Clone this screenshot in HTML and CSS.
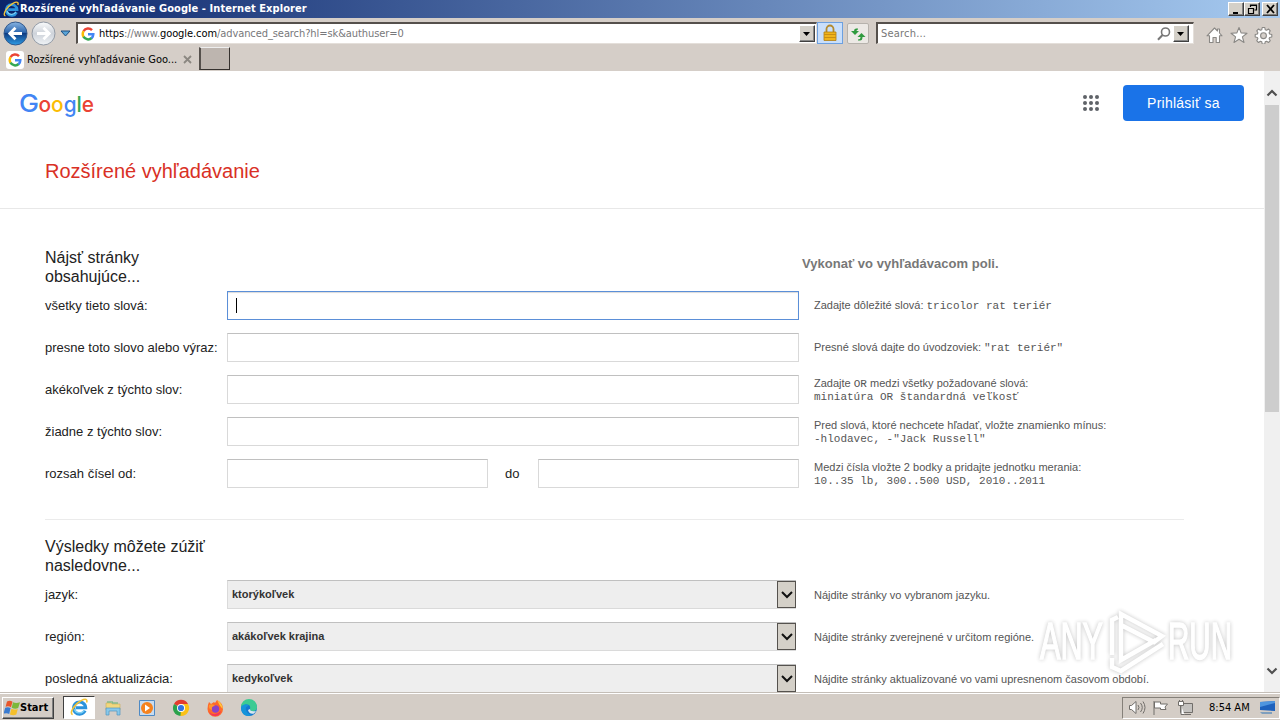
FILE: index.html
```html
<!DOCTYPE html>
<html lang="sk">
<head>
<meta charset="utf-8">
<title>Rozšírené vyhľadávanie Google</title>
<link rel="stylesheet" href="styles.css">
</head>
<body>
<svg class="defs" width="0" height="0">
  <defs>
    <g id="g-mark" fill="none" stroke-width="2.500">
      <path d="M2.600 4.200A5.300 5.300 0 0 1 11 3.200" stroke="#ea4335"/>
      <path d="M2.600 4.200A5.600 5.600 0 0 0 2.500 9.800" stroke="#fbbc05"/>
      <path d="M2.500 9.700A5.300 5.300 0 0 0 10.700 11" stroke="#34a853"/>
      <path d="M7 7.200h5.300A5.300 5.300 0 0 1 10.500 11.200" stroke="#4285f4"/>
    </g>
    <g id="ie-mark">
      <path d="M13.500 11.300A5.400 5.400 0 1 1 14 8.700H5.200" fill="none" stroke="#2b93dc" stroke-width="2.800"/>
      <path d="M12.900 10.900A4.900 4.900 0 0 1 4 10" fill="none" stroke="#7dd0f5" stroke-width="1.200"/>
      <path d="M2.400 14.800C-1 14 3.600 5.600 10 2.300C14 .2 16 1.200 14.800 4" fill="none" stroke="#f3c336" stroke-width="1.400"/>
    </g>
  </defs>
</svg>
<div class="screen">
  <header class="titlebar">
    <svg class="title-icon" width="17" height="17" viewBox="0 0 17 17"><use href="#ie-mark"/></svg>
    <span class="title-text">Rozšírené vyhľadávanie Google - Internet Explorer</span>
    <div class="win-buttons">
      <span class="win-btn"><svg width="11" height="10"><path d="M2 8h5v2H2z"/></svg></span>
      <span class="win-btn"><svg width="11" height="10"><path d="M3.500 3V1h6v5H7.500M3.500 1.500h6M1.500 4.500h5v5h-5zM1 4.500h6" fill="none" stroke="#000" stroke-width="1.200"/></svg></span>
      <span class="win-btn close"><svg width="11" height="10"><path d="M2 1l7 8M9 1L2 9" stroke="#000" stroke-width="1.800"/></svg></span>
    </div>
  </header>

  <nav class="navbar">
    <svg class="history" width="75" height="29" viewBox="0 0 75 29">
      <defs>
        <linearGradient id="blue" x2="0" y2="1"><stop offset="0" stop-color="#88b4e2"/><stop offset=".45" stop-color="#2d67ae"/><stop offset=".5" stop-color="#0f3c82"/><stop offset="1" stop-color="#2d9de6"/></linearGradient>
        <linearGradient id="pale" x2="0" y2="1"><stop offset="0" stop-color="#fafbfc"/><stop offset=".5" stop-color="#ced3da"/><stop offset="1" stop-color="#f0f3f6"/></linearGradient>
      </defs>
      <circle cx="15.500" cy="15.500" r="11.500" fill="url(#blue)" stroke="#33598c"/>
      <path d="M22 15.500H10M15.500 9.800L9.800 15.500l5.700 5.700" fill="none" stroke="#fff" stroke-width="2.800"/>
      <circle cx="43.500" cy="15.500" r="11.500" fill="url(#pale)" stroke="#929aa5"/>
      <path d="M37 15.500h12M43.500 9.800l5.700 5.700-5.700 5.700" fill="none" stroke="#fff" stroke-width="2.800"/>
      <path d="M61 13h9l-4.500 5z" fill="#5aa5d8" stroke="#1d4f80" stroke-width="1"/>
    </svg>
    <div class="address">
      <svg width="14" height="14" viewBox="0 0 14 14"><use href="#g-mark"/></svg>
      <span class="url"><b>https</b>://www.<b>google.com</b>/advanced_search?hl=sk&amp;authuser=0</span>
      <span class="drop"><svg width="8" height="4"><path d="M0 0h7L3.500 4z"/></svg></span>
    </div>
    <span class="lock"><svg width="16" height="18" viewBox="0 0 16 18"><path d="M4.500 9V5a3.500 3.500 0 0 1 7 0v4" fill="none" stroke="#b38a2e" stroke-width="1.800"/><path d="M2 8h12v8.500H2z" fill="#f0b41c" stroke="#b07d14" stroke-width=".8"/><path d="M2 10.500h12M2 13.500h12" stroke="#c98f14"/></svg></span>
    <span class="refresh"><svg width="16" height="16" viewBox="0 0 16 16" fill="#2f9a3e"><path d="M8 2.500H6Q4 2.500 4 5H1l4 4L9 5H6.500Q6.500 3.500 8 3.500z"/><path d="M8 14.500h2q2.500 0 2.500-3.500h3L11.500 7 7.500 11h3q0 2.500-2.500 2.500z"/></svg></span>
    <div class="search">
      <span class="placeholder">Search...</span>
      <svg width="14" height="14" viewBox="0 0 14 14"><circle cx="8.500" cy="5" r="4" fill="none" stroke="#777" stroke-width="1.600"/><path d="M5.500 8L1 12.800" stroke="#777" stroke-width="2"/></svg>
      <span class="drop"><svg width="8" height="4"><path d="M0 0h7L3.500 4z"/></svg></span>
    </div>
    <svg class="tools" width="68" height="18" viewBox="0 0 68 18" fill="#fff" stroke="#8a8885" stroke-width="1.100" stroke-linejoin="round">
      <path d="M3.500 16.500V9.800H1L8.500 2l3 3V3h2v4L16 9.800h-2.500v6.700h-3.300v-5H7v5z"/>
      <path d="M33 1.500l2.100 5.400 5.900.3-4.600 3.700 1.600 5.600-5-3.200-5 3.200 1.600-5.600L25 7.200l5.900-.3z"/>
      <path d="M56.200 1.500h2.600l.4 2.200 1.400.6 1.900-1.300 1.800 1.800-1.200 1.900.5 1.300 2.200.5v2.500l-2.200.5-.5 1.300 1.200 1.900-1.800 1.800-1.900-1.300-1.400.6-.4 2.200h-2.600l-.4-2.200-1.400-.6-1.900 1.300-1.800-1.800 1.200-1.900-.5-1.300-2.200-.5V8.500l2.200-.5.500-1.300-1.200-1.900L52.500 3l1.900 1.300 1.400-.6z"/>
      <circle cx="57.500" cy="9.700" r="2.900" fill="#d6d0ca"/>
    </svg>
  </nav>

  <div class="tabs">
    <div class="tab">
      <span class="tab-icon"><svg width="14" height="14" viewBox="0 0 14 14"><use href="#g-mark"/></svg></span>
      <span class="tab-text">Rozšírené vyhľadávanie Goo...</span>
      <svg width="9" height="9"><path d="M1 1l7 7M8 1L1 8" stroke="#8b8781" stroke-width="1.800"/></svg>
    </div>
    <span class="new-tab"></span>
  </div>

  <div class="viewport">
    <main class="page">
      <div class="page-head">
        <div class="topbar">
          <svg class="logo" width="76" height="34"><text class="initial" x="-1" y="26" textLength="20" lengthAdjust="spacingAndGlyphs" fill="#4285f4">G</text><text x="18.500" y="26" textLength="55.500" lengthAdjust="spacingAndGlyphs"><tspan fill="#ea4335">o</tspan><tspan fill="#fbbc05">o</tspan><tspan fill="#4285f4">g</tspan><tspan fill="#34a853">l</tspan><tspan fill="#ea4335">e</tspan></text></svg>
          <svg class="apps" width="18" height="18" fill="#5f6368"><circle cx="3" cy="3" r="2"/><circle cx="9" cy="3" r="2"/><circle cx="15" cy="3" r="2"/><circle cx="3" cy="9" r="2"/><circle cx="9" cy="9" r="2"/><circle cx="15" cy="9" r="2"/><circle cx="3" cy="15" r="2"/><circle cx="9" cy="15" r="2"/><circle cx="15" cy="15" r="2"/></svg>
          <a class="signin">Prihlásiť sa</a>
        </div>
        <h1>Rozšírené vyhľadávanie</h1>
      </div>
      <form class="form">
        <div class="section-head"><h2>Nájsť stránky<br>obsahujúce...</h2><h3>Vykonať vo vyhľadávacom poli.</h3></div>
        <div class="row"><label>všetky tieto slová:</label><div class="field focus"><span class="caret"></span></div><p>Zadajte dôležité slová: <code>tricolor rat teriér</code></p></div>
        <div class="row"><label>presne toto slovo alebo výraz:</label><div class="field"></div><p>Presné slová dajte do úvodzoviek: <code>"rat teriér"</code></p></div>
        <div class="row"><label>akékoľvek z týchto slov:</label><div class="field"></div><p>Zadajte <code>OR</code> medzi všetky požadované slová:<br><code>miniatúra OR štandardná veľkosť</code></p></div>
        <div class="row"><label>žiadne z týchto slov:</label><div class="field"></div><p>Pred slová, ktoré nechcete hľadať, vložte znamienko mínus:<br><code>-hlodavec, -"Jack Russell"</code></p></div>
        <div class="row"><label>rozsah čísel od:</label><div class="range"><div class="field"></div><span>do</span><div class="field"></div></div><p>Medzi čísla vložte 2 bodky a pridajte jednotku merania:<br><code>10..35 lb, 300..500 USD, 2010..2011</code></p></div>
        <div class="section-head second"><h2>Výsledky môžete zúžiť<br>nasledovne...</h2></div>
        <div class="row"><label>jazyk:</label><div class="select"><b>ktorýkoľvek</b><span class="arrow"><svg width="12" height="8"><path d="M1 1l5 5 5-5" fill="none" stroke="#111" stroke-width="2"/></svg></span></div><p>Nájdite stránky vo vybranom jazyku.</p></div>
        <div class="row"><label>región:</label><div class="select"><b>akákoľvek krajina</b><span class="arrow"><svg width="12" height="8"><path d="M1 1l5 5 5-5" fill="none" stroke="#111" stroke-width="2"/></svg></span></div><p>Nájdite stránky zverejnené v určitom regióne.</p></div>
        <div class="row"><label>posledná aktualizácia:</label><div class="select"><b>kedykoľvek</b><span class="arrow"><svg width="12" height="8"><path d="M1 1l5 5 5-5" fill="none" stroke="#111" stroke-width="2"/></svg></span></div><p>Nájdite stránky aktualizované vo vami upresnenom časovom období.</p></div>
      </form>
    </main>
    <div class="scrollbar">
      <svg width="12" height="8"><path d="M1.500 6.500L6 2l4.500 4.500" fill="none" stroke="#505050" stroke-width="2.200"/></svg>
      <span class="thumb"></span>
      <svg class="down" width="12" height="8"><path d="M1.500 1.500L6 6l4.500-4.500" fill="none" stroke="#505050" stroke-width="2.200"/></svg>
    </div>
  </div>

  <footer class="taskbar">
    <span class="start">
      <svg width="16" height="16" viewBox="0 0 16 16"><path d="M3 1.500q3-1.500 5.500.2L7 7.300Q4.500 5.500 1.600 6.800z" fill="#e8562a"/><path d="M9 2.200q3 1.500 7 0L14.200 8q-3 1.400-6.500-.2z" fill="#7cb83a"/><path d="M1.200 7.800q2.800-1.300 5.400.3L5.200 14Q3 12.500-.5 13.700z" fill="#3a7bd0"/><path d="M7.400 8.800q3 1.500 6.400.1l-1.500 5.600q-3 1.400-6.400-.1z" fill="#f5c02c"/></svg>
      <b>Start</b>
    </span>
    <span class="task active"><svg width="19" height="19" viewBox="0 0 17 17"><use href="#ie-mark"/></svg></span>
    <span class="task"><svg width="18" height="18" viewBox="0 0 18 18"><path d="M2 4h5l1 1h8v6H2z" fill="#f1d77e" stroke="#c9ad59" stroke-width=".6"/><path d="M3 3h6M8 4h6" stroke="#65b36b"/><path d="M2 9h14v7h-3v-4H5v4H2z" fill="#88c8ea" stroke="#5197c0" stroke-width=".7"/></svg></span>
    <span class="task"><svg width="18" height="18" viewBox="0 0 18 18"><path d="M1.500 1.500h15v15h-15z" fill="#c8dcf0" stroke="#4f8ac4"/><circle cx="9" cy="9" r="6" fill="#f5821e"/><path d="M7 5.500v7l5-3.500z" fill="#fff"/></svg></span>
    <span class="task"><svg width="18" height="18" viewBox="0 0 18 18"><path d="M9 9L2 5A8 8 0 0 1 16 5z" fill="#e33b2e"/><path d="M9 9L2 5A8 8 0 0 0 8.500 17L12 11z" fill="#2ba24c"/><path d="M9 9l-.5 8A8 8 0 0 0 16 5H9z" fill="#fbc116"/><circle cx="9" cy="9" r="4" fill="#fff"/><circle cx="9" cy="9" r="3.100" fill="#3474e0"/></svg></span>
    <span class="task"><svg width="18" height="18" viewBox="0 0 18 18"><path d="M3 3l2 2 3-2 1 1 2-3q6 3 6 9a7.500 7.500 0 0 1-15.500 0Q1.500 6 3 3z" fill="#ff6a2a"/><path d="M11 1q6 4 5.500 9l-3-4z" fill="#ffc83c"/><circle cx="9.500" cy="10" r="3.700" fill="#8a43c8"/><path d="M3 6q4-2 6 1-4 0-3 4-4-1-3-5z" fill="#ff9630"/><path d="M3 13q6 5 12-1-1 5-6 5-4 0-6-4z" fill="#f5345a"/></svg></span>
    <span class="task"><svg width="18" height="18" viewBox="0 0 18 18"><circle cx="9" cy="9" r="8" fill="#1678cf"/><path d="M1 8a8 8 0 0 1 16 0q0 4-4 4-3 0-3-2 1-4-3-4.500Q3 5 1 8z" fill="#3ccb93"/><path d="M1 8q4-5 8-1Q5 7 6 11q1 4 6 5Q4 19 1.500 12z" fill="#1594da"/><path d="M10 10q0 3 6 2l-2 2.500q-5 1-6-3.500z" fill="#d8e8ee"/></svg></span>
    <div class="tray">
      <svg width="66" height="18" viewBox="0 0 66 18" fill="#fff" stroke="#716e6a" stroke-width="1">
        <path d="M1.500 6.500h2L8 2.500v12l-4.500-4h-2z"/><path d="M10 6q2 2.500 0 5M12.500 4q3.500 4.500 0 9M15 2.500q4 6 0 12" fill="none"/>
        <path d="M26 2v14M26.500 3h6v2h7l-2.500 3 1 2.500h-5.500V9h-6z"/>
        <path d="M52.500 4.500h12v9h-12zM56 15.500h7" fill="#c4c2bf"/><path d="M50.500 2.500h5v4h-5zM51.500 1v2M54.500 1v2M53 6.500v9h3.500"/>
      </svg>
      <span class="clock">8:54 AM</span>
      <svg class="desktop" width="17" height="15"><path d="M1 2l15-1v10L1 10z" fill="#1e62bd"/><path d="M1 2l15-1v2L1 7z" fill="#4f96df"/><path d="M1 12h12v2H3z" fill="#7f9fbd"/></svg>
    </div>
  </footer>
</div>

<svg class="watermark" width="216" height="68" viewBox="0 0 216 68">
  <text x="4" y="53" textLength="63" lengthAdjust="spacingAndGlyphs">ANY</text>
  <path class="mark" d="M82 11l-6 3v35M76 52v9l9 4 42-27"/>
  <path class="mark" d="M85 32V8l41 22-8 6-33-17v35l35-20"/>
  <text x="132" y="53" textLength="64" lengthAdjust="spacingAndGlyphs">RUN</text>
</svg>
</body>
</html>
```
FILE: styles.css
```css
* { box-sizing: border-box; }
body { margin: 0; background: #fff; font-family: "Liberation Sans", sans-serif; overflow: hidden; }
svg { display: block; flex: none; }
.defs { position: absolute; }
.screen { width: 1280px; height: 720px; display: flex; flex-direction: column; overflow: hidden; }

.titlebar { height: 18px; flex: none; display: flex; align-items: center; padding: 0 2px 0 3px; background: linear-gradient(90deg, #0a246a, #a6caf0); color: #fff; }
.title-text { flex: 1; font: bold 11px/18px "DejaVu Sans Condensed", "DejaVu Sans", sans-serif; letter-spacing: .08px; white-space: nowrap; }
.win-buttons { display: flex; }
.win-btn { width: 16px; height: 14px; padding: 1px 2px; background: #d4d0c8; border: 1px solid #404040; border-top-color: #fff; border-left-color: #fff; box-shadow: inset -1px -1px #808080; }
.win-btn.close { margin-left: 2px; }

.navbar { height: 29px; flex: none; display: flex; background: #d5cec8; }
.address { margin: 4px 0 0 1px; width: 741px; height: 22px; display: flex; align-items: center; padding-left: 3px; background: #fff; border: 1px solid #e4dfda; border-top: 2px solid #55504c; border-left: 2px solid #55504c; font-family: "DejaVu Sans Condensed", "DejaVu Sans", sans-serif; font-size: 11px; }
.url { flex: 1; margin-left: 4px; color: #77777a; white-space: nowrap; letter-spacing: -.08px; }
.url b { font-weight: normal; color: #000; }
.drop { width: 16px; height: 17px; display: flex; align-items: center; justify-content: center; background: #d4d0c8; border: 1px solid #404040; border-top-color: #fff; border-left-color: #fff; box-shadow: inset -1px -1px #888; }
.address .drop { margin-right: 1px; }
.lock { margin-top: 4px; width: 26px; height: 22px; display: flex; justify-content: center; align-items: center; background: #c9dffb; border: 1px solid #6ca0e0; }
.refresh { margin: 5px 0 0 4px; width: 22px; height: 21px; display: flex; align-items: center; justify-content: center; background: #ece9e5; border: 1px solid #b6b2ac; border-radius: 2px; }
.search { margin: 4px 0 0 7px; width: 318px; height: 22px; display: flex; align-items: center; padding: 0 4px 0 3px; background: #fff; border: 1px solid #e4dfda; border-top: 2px solid #55504c; border-left: 2px solid #55504c; font: 11px "DejaVu Sans Condensed", "DejaVu Sans", sans-serif; color: #777; }
.placeholder { flex: 1; letter-spacing: .2px; }
.search .drop { margin-left: 2px; }
.tools { margin: 8px 0 0 12px; }

.tabs { height: 24px; flex: none; display: flex; background: #d5cec8; }
.tab { width: 199px; height: 24px; display: flex; align-items: center; padding: 1px 0 0 6px; }
.tab-icon { width: 18px; height: 18px; padding: 2px; background: #fff; border-radius: 3px; }
.tab-text { width: 151px; margin: 0 5px 0 3px; font: 11px "DejaVu Sans Condensed", "DejaVu Sans", sans-serif; white-space: nowrap; }
.new-tab { width: 31px; height: 23px; background: #bdb5af; border: 1px solid #35312e; border-top-color: #eee; border-left: 2px solid #55504c; }

.viewport { height: 621px; flex: none; display: flex; overflow: hidden; }
.page { width: 1264px; height: 621px; overflow: hidden; background: #fff; }
.page-head { height: 138px; border-bottom: 1px solid #e8e8e8; }
.topbar { height: 64px; display: flex; align-items: center; padding: 0 20px; }
.logo { font: 500 22px Inter, sans-serif; }
.initial { font-size: 24px; }
.apps { margin-left: auto; margin-right: 23px; }
.signin { width: 121px; height: 36px; border-radius: 4px; background: #1a73e8; color: #fff; font-size: 14px; line-height: 36px; text-align: center; letter-spacing: .25px; }
h1 { margin: 24px 0 0 45px; font-size: 20px; line-height: 24px; font-weight: normal; color: #d93025; }
.form { padding: 39px 80px 0 45px; }
.section-head { height: 43px; display: flex; }
.section-head h2 { width: 757px; margin: 0; font-size: 16px; line-height: 19px; font-weight: normal; color: #222; }
.section-head h3 { margin: 7px 0 0; font-size: 13px; line-height: 18px; color: #777; white-space: nowrap; letter-spacing: .03px; }
.section-head.second { height: 61px; margin-top: 31px; padding-top: 17px; border-top: 1px solid #ebebeb; }
.row { height: 29px; margin-bottom: 13px; display: grid; grid-template-columns: 182px 572px 1fr; align-items: center; }
.row label { font-size: 13px; color: #222; white-space: nowrap; }
.row p { margin: 0 0 0 15px; font-size: 11px; line-height: 13px; color: #555; white-space: nowrap; }
.second ~ .row p { padding-top: 1px; }
code { font-family: "Liberation Mono", monospace; font-size: 11px; line-height: 12px; }
.field { height: 29px; border: 1px solid #d9d9d9; border-top-color: #c0c0c0; }
.field.focus { border-color: #5b8fd8; box-shadow: inset 0 1px 1px rgba(0,0,0,.15); padding: 6px 0 0 8px; }
.caret { display: block; width: 1px; height: 15px; background: #000; }
.range { display: grid; grid-template-columns: 261px 50px 261px; align-items: center; }
.range span { padding-left: 17px; font-size: 13px; color: #222; }
.select { width: 569px; height: 29px; display: flex; align-items: center; padding-left: 4px; background: #eee; border: 1px solid #dadada; border-right: 0; border-top-color: #c0c0c0; }
.select b { flex: 1; font-size: 11px; color: #333; padding-bottom: 1px; }
.arrow { width: 19px; height: 27px; display: flex; align-items: center; justify-content: center; background: #d4d0c8; border: 1px solid #55524e; }
.scrollbar { width: 16px; display: flex; flex-direction: column; align-items: center; padding: 18px 1px 0; background: #f0f0f0; }
.thumb { width: 14px; height: 307px; margin-top: 8px; background: #cdcdcd; }
.down { margin: auto 0 17px; }

.taskbar { height: 28px; flex: none; display: flex; align-items: center; padding: 2px 0 0 2px; background: #d4cdc6; border-top: 1px solid #c4beb7; box-shadow: inset 0 1px #fff; }
.start { width: 52px; height: 22px; display: flex; align-items: center; padding-left: 1px; border: 1px solid #404040; border-top-color: #fff; border-left-color: #fff; box-shadow: inset -1px -1px #808080; margin-right: 9px; }
.start b { font: bold 11px "DejaVu Sans Condensed", "DejaVu Sans", sans-serif; }
.task { width: 32px; height: 23px; margin-right: 2px; display: flex; align-items: center; justify-content: center; }
.task.active { background: #fff; border: 1px solid #fff; border-top-color: #404040; border-left-color: #404040; }
.tray { margin-left: auto; width: 158px; height: 22px; display: flex; align-items: center; padding-left: 5px; border: 1px solid #fff; border-top-color: #858079; border-left-color: #858079; }
.clock { margin-left: 15px; width: 44px; font: 11px "DejaVu Sans Condensed", "DejaVu Sans", sans-serif; white-space: nowrap; }
.desktop { margin-left: 6px; }

.watermark { position: absolute; left: 1036px; top: 606px; overflow: visible; fill: #fff; filter: drop-shadow(0 0 2px rgba(0,0,0,.28)); opacity: .85; }
.watermark text { font: 51px "Liberation Sans", sans-serif; stroke: #fff; stroke-width: 1.5; }
.mark { fill: none; stroke: #fff; stroke-width: 4.5; }
```
